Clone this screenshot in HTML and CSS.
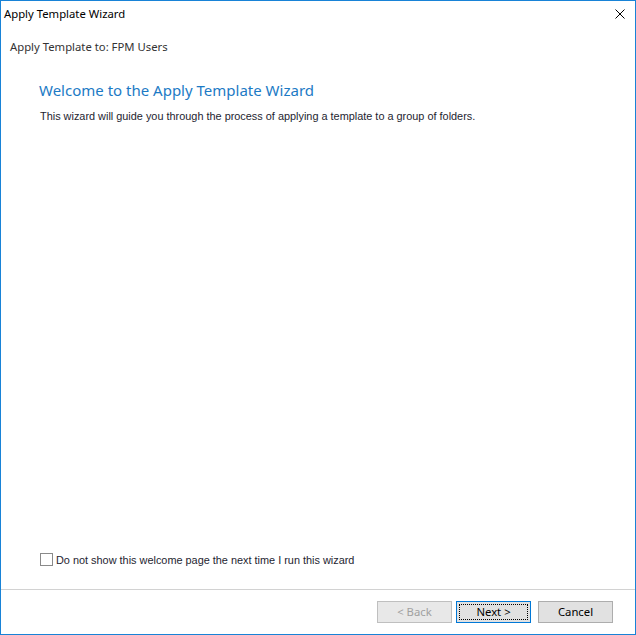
FILE: index.html
```html
<!DOCTYPE html>
<html lang="en">
<head>
    <meta charset="UTF-8">
    <title>Apply Template Wizard</title>
    <link rel="stylesheet" href="styles.css">
</head>
<body>

<div class="window">
    <!-- Barra de título -->
    <div class="titlebar">
        <span class="title">Apply Template Wizard</span>
        <span class="close">
            <svg width="10" height="10" viewBox="0 0 10 10"><path d="M0.5 0.5 L9.5 9.5 M9.5 0.5 L0.5 9.5" stroke="#000" stroke-width="1" fill="none"/></svg>
        </span>
    </div>

    <div class="subheader">Apply Template to: FPM Users</div>

    <div class="page">
        <h1>Welcome to the Apply Template Wizard</h1>
        <p>This wizard will guide you through the process of applying a template to a group of folders.</p>
    </div>

    <label class="check">
        <span class="box"></span>
        Do not show this welcome page the next time I run this wizard
    </label>

    <!-- Botões -->
    <div class="footer">
        <button class="btn" disabled>&lt; Back</button>
        <button class="btn default"><span>Next &gt;</span></button>
        <button class="btn cancel">Cancel</button>
    </div>
</div>

</body>
</html>
```

FILE: styles.css
```css
body {
    margin: 0;
    padding: 0;
    background-color: #fff;
    font-family: "Noto Sans", "Open Sans", sans-serif;
}
.window {
    box-sizing: border-box;
    width: 636px;
    height: 635px;
    border: 1px solid #1883d7;
    display: flex;
    flex-direction: column;
    background-color: #fff;
}
.titlebar {
    height: 25px;
    display: flex;
    align-items: center;
    justify-content: space-between;
    padding-left: 3px;
    padding-right: 10px;
    font-size: 11.3px;
    color: #000;
}
.close {
    display: flex;
    margin-top: 1px;
}
.subheader {
    margin-top: 13px;
    padding-left: 9px;
    font-size: 11.3px;
    color: #333;
}
.page {
    padding-left: 38px;
    margin-top: 26px;
}
h1 {
    margin: 0;
    font-size: 15px;
    font-weight: normal;
    color: #1c7ac5;
}
p {
    margin: 10px 0 0 1px;
    font-family: "Liberation Sans", Arial, sans-serif;
    font-size: 10.9px;
    color: #1e1e30;
}
.check {
    margin-top: auto;
    margin-bottom: 23px;
    margin-left: 39px;
    display: flex;
    align-items: center;
    gap: 3px;
    font-family: "Liberation Sans", Arial, sans-serif;
    font-size: 10.9px;
    color: #1e1e30;
}
.box {
    width: 11px;
    height: 11px;
    border: 1px solid #8a8a8a;
    background-color: #fff;
}
.footer {
    border-top: 1px solid #d2d2d2;
    height: 44px;
    display: flex;
    align-items: center;
    justify-content: flex-end;
    padding-right: 22px;
}
.btn {
    box-sizing: border-box;
    width: 75px;
    height: 22px;
    padding: 0 0 1px;
    font-family: "Noto Sans", "Open Sans", sans-serif;
    font-size: 11.3px;
    color: #000;
    background-color: #e1e1e1;
    border: 1px solid #adadad;
    margin-left: 4px;
}
.btn:disabled {
    color: #a0a0a0;
    background-color: #e8e8e8;
    border-color: #bfbfbf;
}
.btn.default {
    border-color: #0078d7;
    padding: 2px;
}
.btn.default span {
    display: flex;
    align-items: center;
    justify-content: center;
    height: 100%;
    box-sizing: border-box;
    padding-bottom: 1px;
    border: 1px dotted #000;
}
.btn.cancel {
    margin-left: 7px;
}
```
